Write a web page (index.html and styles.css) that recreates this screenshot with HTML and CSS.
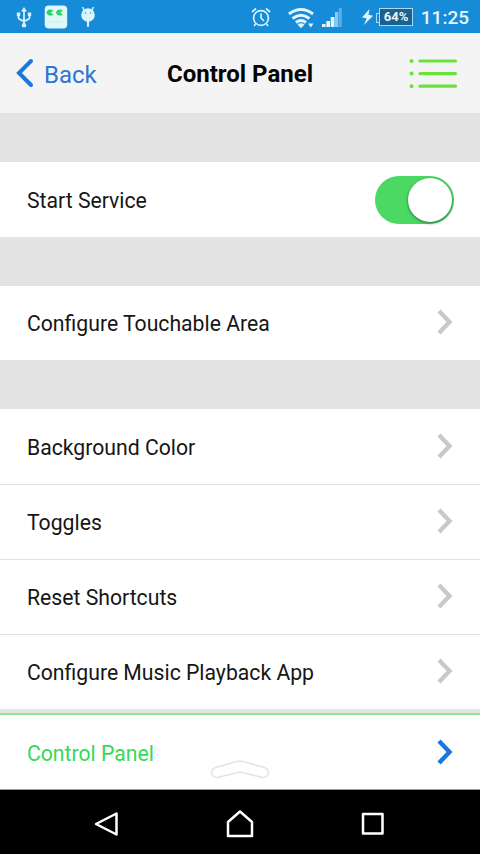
FILE: index.html
```html
<!DOCTYPE html>
<html lang="en">
<head>
<meta charset="utf-8">
<title>Control Panel</title>
<link rel="stylesheet" href="styles.css">
</head>
<body>
<svg class="defs" aria-hidden="true">
  <symbol id="chevron" viewBox="0 0 18 28"><path d="M3 3 13.500 14 3 25" fill="none" stroke="currentColor" stroke-width="4.400"/></symbol>
</svg>
<div class="status">
  <svg class="usb" width="16" height="21" viewBox="0 0 16 21" fill="none" stroke="#d9f1ff" stroke-width="1.800"><path d="M8 3v15M2.500 7v3.500Q3 13 8 14q5-1 5.500-3.500V7"/><path d="m8 0 3 4.500H5zM.8 5.500h3.400v3.400H.8zM11.800 5.500h3.400v3.400h-3.400z" fill="#d9f1ff" stroke="none"/><circle cx="8" cy="18.300" r="2.200" fill="#d9f1ff" stroke="none"/></svg>
  <svg class="face" width="24" height="24" viewBox="0 0 24 24"><rect x=".7" y=".5" width="22.500" height="23" rx="4" fill="#e0f7f7"/><path d="M2.500 7.500Q3.500 4.500 6 4.500L9.500 5 7 7.500 9.500 10Q3.500 12 2.500 7.500zM12 7.500Q13 4.500 15.500 4.500L19 5l-2.500 2.500L19 10Q13 12 12 7.500z" fill="#35cf69"/><path d="M5 17h13" stroke="#d0e8ea"/></svg>
  <svg class="droid" width="16" height="22" viewBox="0 0 16 22"><path d="m2.500 1 2 4M13.500 1l-2 4" stroke="#d9f4ff" stroke-width="1.500"/><circle cx="8" cy="9" r="6.800" fill="#d9f4ff"/><path d="M8 15v5" stroke="#d9f4ff" stroke-width="2.200" stroke-linecap="round"/><circle cx="5.500" cy="7" r=".7" fill="#168bd7"/><circle cx="10.500" cy="7" r=".7" fill="#168bd7"/></svg>
  <svg class="alarm" width="20" height="20" viewBox="0 0 20 20" fill="none" stroke="#d9f1ff" stroke-width="1.700"><circle cx="10" cy="11" r="7.400"/><path d="M10 6.500V11l3 3M1 5l4-3.500M19 5l-4-3.500M4.500 17l-1.500 2M15.500 17l1.500 2"/></svg>
  <svg class="wifi" width="26" height="22" viewBox="0 0 26 22" fill="none" stroke="#e2f5ff" stroke-width="3.100"><path d="M1 7Q13-2 25 7M4.500 11.500Q13 5 21.500 11.500M8 15.500q5-4 10 0"/><path d="m9.500 17.500 3.500 3.800 3.500-3.800q-3.500-2.500-7 0zM20 16.500h5.500l-2.700 4z" fill="#e2f5ff" stroke="none"/></svg>
  <svg class="signal" width="20" height="19" viewBox="0 0 20 19"><path d="M0 16h3.500v3H0zM4.300 13H8v6H4.300zM8.700 9h3.800v10H8.700z" fill="#e2f5ff"/><path d="M13 4h3.300v15H13z" fill="#8bc9ef"/><path d="M16.800 0h3v19h-3z" fill="#59afe3"/></svg>
  <svg class="bolt" width="12" height="16" viewBox="0 0 12 16"><path d="M7.500 0 0 8.500l4.600.8L2 16l9-9.300-4.500-1z" fill="#e2f5ff"/></svg>
  <span class="battery">64%</span>
  <span class="time">11:25</span>
</div>
<header class="header">
  <svg class="backicon" width="20" height="30" viewBox="0 0 20 30"><path d="M17 3 5 15l12 12" fill="none" stroke="#1878dc" stroke-width="4" stroke-linecap="round"/></svg>
  <span class="back">Back</span>
  <h1>Control Panel</h1>
  <svg class="list" width="49" height="31" viewBox="0 0 49 31" stroke="#6be23c" stroke-width="3.200" stroke-linecap="round"><path d="M11 3h35.500M11 15.600h35.500M11 28.200h35.500"/><path d="M2.500 3h.1M2.500 15.600h.1M2.500 28.200h.1" stroke-width="4"/></svg>
</header>
<main>
  <section class="group">
    <div class="row"><span>Start Service</span><span class="toggle"><i></i></span></div>
  </section>
  <section class="group">
    <div class="row"><span>Configure Touchable Area</span><svg class="chev"><use href="#chevron"/></svg></div>
  </section>
  <section class="group">
    <div class="row"><span>Background Color</span><svg class="chev"><use href="#chevron"/></svg></div>
    <div class="row"><span>Toggles</span><svg class="chev"><use href="#chevron"/></svg></div>
    <div class="row"><span>Reset Shortcuts</span><svg class="chev"><use href="#chevron"/></svg></div>
    <div class="row"><span>Configure Music Playback App</span><svg class="chev"><use href="#chevron"/></svg></div>
  </section>
</main>
<div class="panel">
  <span>Control Panel</span><svg class="chev"><use href="#chevron"/></svg>
  <svg class="handle" width="60" height="20" viewBox="0 0 60 20"><path d="M5.500 7.500 27 1.500q3-.8 6 0l21.500 6q4 1.500 4 5-.8 5.500-6 5L30 12 7.500 17.500q-5.200.5-6-5 0-3.500 4-5z" fill="#fff" stroke="#e4e4e4" stroke-width="1.600"/></svg>
</div>
<nav class="nav">
  <svg width="26" height="28" viewBox="0 0 26 28"><path d="M23.500 3.500v21L3 14z"/></svg>
  <svg width="28" height="28" viewBox="0 0 28 28"><path d="M2 26V12L14 1.500 26 12v14z"/></svg>
  <svg width="24" height="24" viewBox="0 0 24 24"><path d="M2 2h19.500v19.500H2z"/></svg>
</nav>
</body>
</html>
```
FILE: styles.css
```css
* { box-sizing: border-box; }
body {
  margin: 0;
  width: 480px;
  height: 854px;
  overflow: hidden;
  background: #e3e3e3;
  font-family: Roboto, "Liberation Sans", sans-serif;
  color: #161616;
}
svg { display: block; flex: none; }
.defs { position: absolute; width: 0; height: 0; }
.status {
  display: flex;
  align-items: center;
  height: 33px;
  padding: 0 11px 0 16px;
  background: #168bd7;
  color: #e6f6ff;
}
.usb { margin-top: 2px; }
.face { margin-left: 12px; }
.droid { margin-left: 12px; }
.alarm { margin-left: 155px; }
.wifi { margin-left: 17px; margin-top: 2px; }
.signal { margin-left: 8px; margin-top: 2px; }
.bolt { margin-left: 20px; }
.battery {
  position: relative;
  width: 34px;
  height: 18px;
  margin-left: 5px;
  border: 1.500px solid #a9d9f5;
  background: #1d5f8d;
  font-size: 13px;
  font-weight: 700;
  line-height: 16px;
  text-align: center;
}
.battery::before {
  content: "";
  position: absolute;
  left: -4px;
  top: 4px;
  width: 3px;
  height: 8px;
  border: 1px solid #a9d9f5;
  border-right: 0;
}
.time { margin-left: auto; padding-top: 2px; font-size: 19px; font-weight: 500; }
.header {
  display: flex;
  align-items: center;
  height: 80px;
  padding: 0 22px 2px 14px;
  border-top: 2px solid #edf7ff;
  background: #f4f4f4;
}
.back { margin-left: 10px; padding-top: 3px; width: 123px; font-size: 24px; color: #2b78d2; }
h1 { margin: 0; padding-top: 2px; font-size: 24px; font-weight: 700; color: #050505; white-space: nowrap; }
.list { margin-left: auto; }
.group { padding-top: 49px; }
.row {
  display: flex;
  align-items: center;
  justify-content: space-between;
  height: 75px;
  padding: 0 26px 0 27px;
  background: #fff;
  font-size: 21.200px;
}
.row > span:first-child, .panel > span { padding-top: 1px; }
.group:nth-child(2) .row { height: 74px; }
.row + .row { border-top: 1px solid #e0e0e0; }
.chev { width: 18px; height: 28px; color: #c9c9c9; margin-top: -2px; }
.toggle {
  display: flex;
  justify-content: flex-end;
  width: 79px;
  height: 48px;
  padding: 2px;
  border-radius: 24px;
  background: #4bd964;
}
.toggle i {
  width: 44px;
  height: 44px;
  border-radius: 50%;
  background: #fff;
  box-shadow: 0 1px 3px #286b35;
}
.panel {
  position: relative;
  display: flex;
  align-items: center;
  justify-content: space-between;
  height: 77px;
  margin-top: 4px;
  padding: 0 26px 0 27px;
  border-top: 2px solid #8ce88c;
  border-bottom: 1px solid #999;
  background: #fff;
  color: #35d957;
  font-size: 21.200px;
}
.panel > span { padding-top: 2px; }
.panel .chev { color: #1878dc; margin-top: 0; }
.handle { position: absolute; left: 210px; top: 45px; }
.nav {
  display: flex;
  align-items: center;
  justify-content: space-between;
  height: 64px;
  padding: 4px 95px 0 93px;
  background: #000;
}
.nav path { fill: none; stroke: #fff; stroke-width: 2.500; stroke-linejoin: round; }
```
